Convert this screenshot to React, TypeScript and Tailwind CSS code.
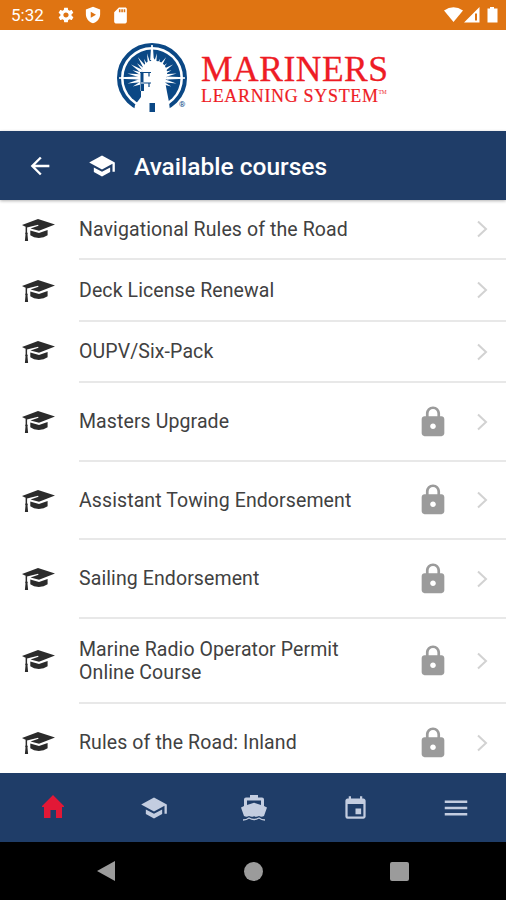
import { IoMdArrowBack, IoMdSettings } from 'react-icons/io';
import { MdSchool, MdLock, MdEvent, MdMenu, MdSdCard } from 'react-icons/md';

interface Course {
  title: string;
  locked?: boolean;
  height: string;
}

const courses: Course[] = [
  { title: 'Navigational Rules of the Road', height: 'h-[60px]' },
  { title: 'Deck License Renewal', height: 'h-[62px]' },
  { title: 'OUPV/Six-Pack', height: 'h-[61px]' },
  { title: 'Masters Upgrade', locked: true, height: 'h-[79px]' },
  { title: 'Assistant Towing Endorsement', locked: true, height: 'h-[78px]' },
  { title: 'Sailing Endorsement', locked: true, height: 'h-[79px]' },
  { title: 'Marine Radio Operator Permit Online Course', locked: true, height: 'h-[85px]' },
  { title: 'Rules of the Road: Inland', locked: true, height: 'h-[79px]' },
];

function StatusBar() {
  return (
    <div className="flex h-[30px] shrink-0 items-center bg-[#df7412] pl-[11px] pr-2 text-white">
      <span className="w-[46px] pt-px text-[17px] leading-none">5:32</span>
      <IoMdSettings className="size-[18px]" />
      <svg viewBox="0 0 24 24" className="ml-[9px] size-[18px]" fill="currentColor">
        <path fillRule="evenodd" d="M12 1 2.500 4.500V11c0 5.500 4 10.500 9.500 12 5.500-1.500 9.500-6.500 9.500-12V4.500zM9 7.500v8l7-4z" />
      </svg>
      <MdSdCard className="ml-[9px] size-[19px]" />
      <svg viewBox="0 0 54 18" className="ml-auto h-[18px] w-[54px]" fill="currentColor">
        <path d="M0 4.500Q9.500-2 19 4.500L9.500 16z" />
        <path fillRule="evenodd" d="M35.500 1v15.500H20zM31 7.500v7h2v-7z" />
        <path d="M46 1h4v1.500h3.500v14h-10v-14H46z" />
      </svg>
    </div>
  );
}

// Compass ring with the lighthouse and its rays
function LighthouseLogo() {
  const rays = Array.from({ length: 21 }, (_, i) => -204 + i * 11.4);

  return (
    <svg viewBox="0 0 72 72" className="size-[72px] shrink-0">
      <circle cx="36" cy="36" r="33" fill="#fff" stroke="#0b4885" strokeWidth="4" />
      <circle cx="36" cy="36" r="28.500" fill="#0b4885" />
      <g fill="#fff">
        {rays.map((angle, i) => (
          <path
            key={angle}
            d={i % 2 ? 'M48 34.300 61 36 48 37.700z' : 'M48 34.600 57 36 48 37.400z'}
            transform={`rotate(${angle} 36 36)`}
          />
        ))}
        <path d="M35.200 3h1.600l1 15h-3.600zM3 35.200v1.600l20 .6v-2.800zM69 35.200v1.600l-18 .6v-2.800z" />
      </g>
      <path
        fill="#fff"
        d="M37 16c1 0 2 2 3 3 5 0 8 3 10 7 2 5 1 9-1 13l2 11 2 10 1 9v3H18v-3l1-6 3-4 3-4V49h-1V31h2c0-7 4-12 9-12 1-1 1-3 2-3z"
      />
      <path fill="none" stroke="#0b4885" strokeWidth="1.200" d="M24 30.500h11M33 30.500v4M24 41h11M33 41v4" />
      <path fill="#0b4885" d="M24.500 31h3v9h-3zM24.500 42h3.500v7h-3.500zM33.500 61H39v9h-5.500z" />
    </svg>
  );
}

function Brand() {
  return (
    <div className="relative flex h-[101px] shrink-0 bg-white pl-[116px] pt-[12px]">
      <LighthouseLogo />
      <svg viewBox="0 0 190 60" className="ml-[12px] mt-[6px] h-[60px] w-[190px]">
        <g fill="#ee1c25" stroke="#ee1c25" fontFamily="'Liberation Serif', serif">
          <text x="1" y="33" fontSize="35.500" strokeWidth="0.300" textLength="187">MARINERS</text>
          <text x="1" y="54" fontSize="18" strokeWidth="0.200" textLength="177">LEARNING SYSTEM</text>
          <text x="178.500" y="46" fontSize="5.500" strokeWidth="0">TM</text>
        </g>
      </svg>
      <span className="absolute left-[179px] top-[71px] text-[8px] leading-none text-[#0b4885]">®</span>
    </div>
  );
}

function CapIcon() {
  return (
    <svg viewBox="0 0 33 23" className="h-[23px] w-[33px]" fill="#2b2b2b">
      <path d="M0 6 16 0l17 5.500-16 6.200-8.500-2.200 8-2.700-.4-1L5 8.500z" />
      <path d="M8.300 11.500 17 14l8.600-3v5.300q-3.600 2.600-8.800 2.600t-8.500-2.600z" />
      <path d="M3.600 8h1.500v5.200q1.200 1 .4 2.200l.6 6.600H2.900l.6-6.600q-.8-1.200.1-2.200z" />
    </svg>
  );
}

function HomeIcon() {
  return (
    <svg viewBox="0 0 22 23" className="mb-[3px] h-[23px] w-[22px]" fill="#e21836">
      <path d="M11 0 22 11v1h-2v11h-6v-8H8.500v8H2V12H0v-1z" />
    </svg>
  );
}

function BoatIcon() {
  return (
    <svg viewBox="0 0 26 26" className="size-[26px]" fill="currentColor">
      <path fillRule="evenodd" d="M9 0h8v2.500h4q2 0 2 2V11l3 1.500-3 8.500q-2.500 1.500-5 0-2.500 1.500-5 .3-2.500 1.200-5-.3-2.500 1.500-5 0L0 12.500 3 11V4.500q0-2 2-2h4zM6 5.500V10l7-2.300L20 10V5.500z" />
      <path d="M2 25q3.500 0 6-2 2.500 1.500 5 1.500t5-1.500q2.500 2 6 2" fill="none" stroke="currentColor" strokeWidth="1.300" />
    </svg>
  );
}

function CourseRow({ title, locked, height }: Course) {
  return (
    <li className={`flex shrink-0 items-stretch ${height}`}>
      <div className="flex w-[79px] items-center pl-[22px]">
        <CapIcon />
      </div>
      <div className="flex flex-1 items-center border-b-2 border-[#e8e8e8] pr-[18px]">
        <span className="w-[290px] text-[19.500px] leading-[23px] tracking-[0.100px] text-[#414141]">
          {title}
        </span>
        {locked && <MdLock className="ml-[46.500px] size-[34px] text-[#9b9b9b]" />}
        <svg viewBox="0 0 12 18" className="ml-auto h-[18px] w-[12px]" fill="none" stroke="#d2d2d2" strokeWidth="2">
          <path d="m2 1.500 8 7.500-8 7.500" />
        </svg>
      </div>
    </li>
  );
}

export default function App() {
  return (
    <div className="flex h-[900px] w-[506px] flex-col overflow-hidden bg-white font-['Roboto',sans-serif]">
      <StatusBar />
      <Brand />
      <header className="z-10 flex h-[69px] shrink-0 items-center bg-[#1f3d68] pl-[26px] text-white shadow-[0_1px_3px_rgba(0,0,0,0.3)]">
        <IoMdArrowBack className="size-[28px]" />
        <MdSchool className="ml-[34px] size-[28px]" />
        <h1 className="ml-[18px] pt-[4px] text-[24.500px] font-medium">Available courses</h1>
      </header>
      <ul className="flex min-h-0 flex-1 flex-col overflow-hidden">
        {courses.map((course) => (
          <CourseRow key={course.title} {...course} />
        ))}
      </ul>
      <nav className="grid h-[69px] shrink-0 grid-cols-5 place-items-center bg-[#1f3d68] pl-[3px] pt-px text-[#c3cde0]">
        <HomeIcon />
        <MdSchool className="size-[28px]" />
        <BoatIcon />
        <MdEvent className="size-[27px]" />
        <MdMenu className="size-[30px]" />
      </nav>
      <div className="flex h-[58px] shrink-0 items-center justify-between bg-black pl-[96px] pr-[97px] text-[#9b9b9b]">
        <svg viewBox="0 0 20 20" className="size-[20px]" fill="currentColor">
          <path d="M19 0v20L1 10z" />
        </svg>
        <span className="size-[19px] rounded-full bg-current" />
        <span className="size-[19px] rounded-xs bg-current" />
      </div>
    </div>
  );
}
